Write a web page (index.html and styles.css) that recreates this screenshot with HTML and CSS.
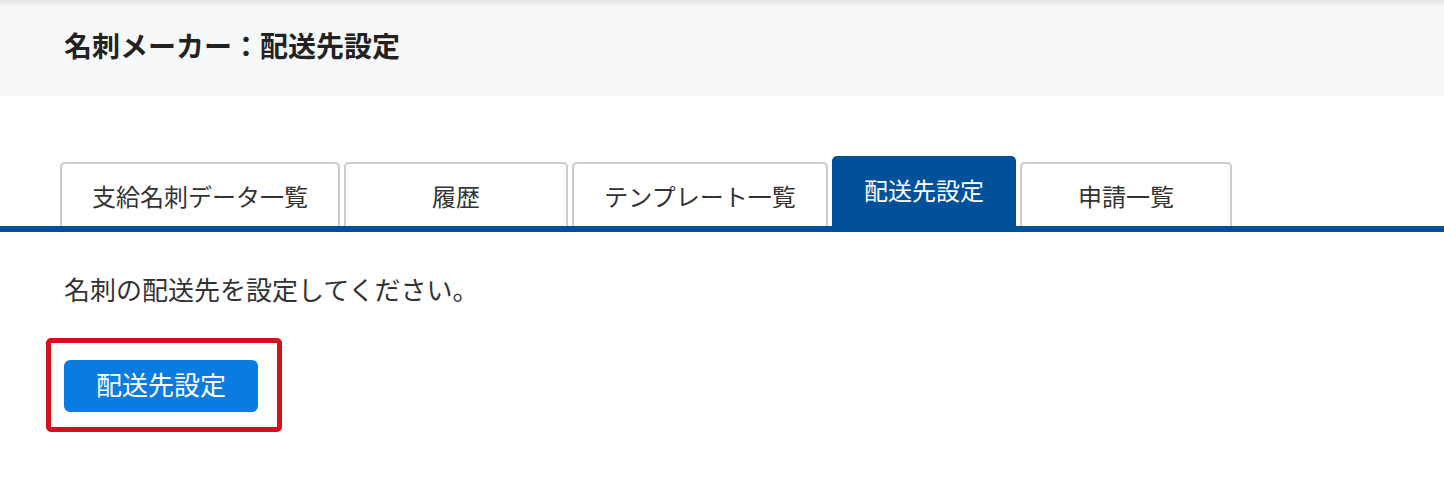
FILE: index.html
```html
<!DOCTYPE html>
<html lang="ja">
<head>
    <meta charset="UTF-8">
    <meta name="viewport" content="width=device-width, initial-scale=1.0">
    <title>名刺メーカー：配送先設定</title>
    <link rel="stylesheet" href="styles.css">
</head>
<body>
    <header class="page-header">
        <h1>名刺メーカー：配送先設定</h1>
    </header>

    <nav class="tabs">
        <a class="tab tab-list" href="#">支給名刺データ一覧</a>
        <a class="tab tab-history" href="#">履歴</a>
        <a class="tab tab-template" href="#">テンプレート一覧</a>
        <a class="tab tab-delivery active" href="#">配送先設定</a>
        <a class="tab tab-request" href="#">申請一覧</a>
    </nav>

    <div class="content">
        <p class="lead">名刺の配送先を設定してください。</p>

        <!-- 強調枠 -->
        <div class="highlight">
            <button class="btn-primary">配送先設定</button>
        </div>
    </div>
</body>
</html>
```

FILE: styles.css
```css
body {
    margin: 0;
    font-family: "Noto Sans CJK JP", "Noto Sans", sans-serif;
    color: #333;
    background: #fff;
}
.page-header {
    height: 96px;
    display: flex;
    align-items: center;
    padding: 0 0 6px 64px;
    box-sizing: border-box;
    background: #f7f8fa;
    box-shadow: inset 0 10px 8px -8px rgba(0,0,0,0.12);
}
.page-header h1 {
    margin: 0;
    font-size: 28px;
    font-weight: bold;
    color: #222;
}
.tabs {
    display: flex;
    align-items: flex-end;
    gap: 4px;
    margin-top: 60px;
    padding-left: 60px;
    border-bottom: 6px solid #00509a;
}
.tab {
    display: flex;
    align-items: center;
    justify-content: center;
    height: 64px;
    box-sizing: border-box;
    border: 2px solid #cccccc;
    border-bottom: none;
    border-radius: 5px 5px 0 0;
    font-size: 24px;
    color: #333;
    text-decoration: none;
    background: #fff;
}
.tab-list { width: 280px; }
.tab-history { width: 224px; }
.tab-template { width: 256px; }
.tab-delivery { width: 184px; }
.tab-request { width: 212px; }
.tab.active {
    height: 70px;
    border-color: #00509a;
    background: #00509a;
    color: #fff;
    padding-bottom: 6px;
}
.content {
    padding: 0 64px;
}
.lead {
    margin: 37px 0 30px;
    font-size: 26px;
    line-height: 39px;
}
.highlight {
    display: inline-block;
    margin-left: -18px;
    padding: 17px 19px 15px 13px;
    border: 5px solid #d50f1e;
    border-radius: 5px;
}
.btn-primary {
    display: block;
    width: 194px;
    height: 52px;
    padding: 0 0 5px;
    border: none;
    border-radius: 6px;
    background: #0a7be0;
    color: #fff;
    font-family: inherit;
    font-size: 26px;
    cursor: pointer;
}
```
